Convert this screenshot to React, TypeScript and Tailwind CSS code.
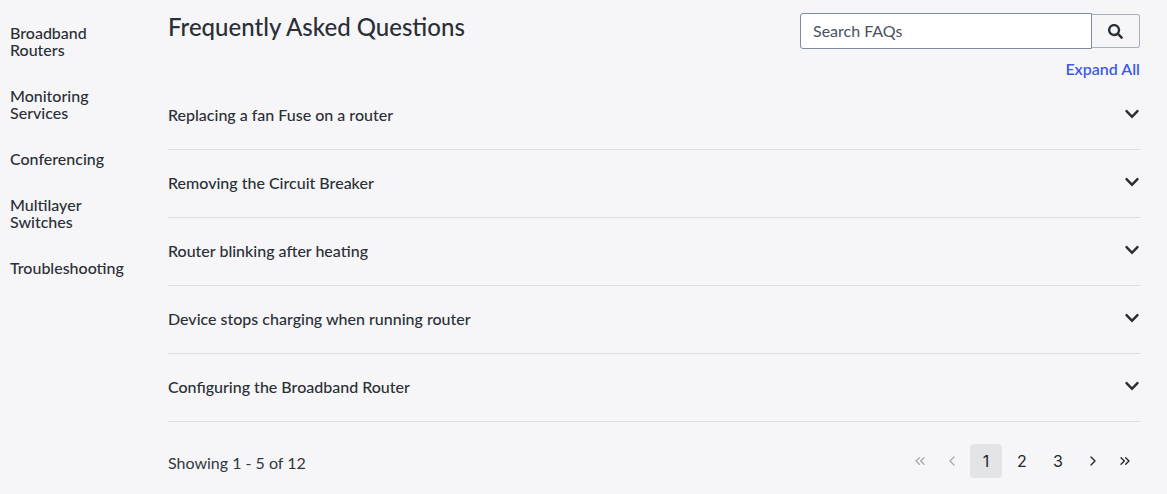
import { FaChevronDown, FaSearch } from 'react-icons/fa';
import { LuChevronLeft, LuChevronRight, LuChevronsLeft, LuChevronsRight } from 'react-icons/lu';

const categories = [
  ['Broadband', 'Routers'],
  ['Monitoring', 'Services'],
  ['Conferencing'],
  ['Multilayer', 'Switches'],
  ['Troubleshooting'],
];

const questions = [
  'Replacing a fan Fuse on a router',
  'Removing the Circuit Breaker',
  'Router blinking after heating',
  'Device stops charging when running router',
  'Configuring the Broadband Router',
];

export default function App() {
  return (
    <div className="flex h-[494px] w-[1167px] overflow-hidden bg-[#f6f6f9] font-['Lato',sans-serif] text-[#2b2f36]">
      <aside className="w-[168px] shrink-0 pl-[10px] pt-[24px]">
        <ul className="flex flex-col gap-[29px]">
          {categories.map((lines) => (
            <li key={lines[0]} className="text-[16px] font-medium leading-[17px]">
              {lines.map((line) => (
                <div key={line}>{line}</div>
              ))}
            </li>
          ))}
        </ul>
      </aside>

      <main className="flex w-[972px] flex-col">
        <div className="flex items-start justify-between pt-[13px]">
          <h1 className="text-[24px] font-medium leading-[28px]">Frequently Asked Questions</h1>
          <div className="flex flex-col items-end">
            <div className="flex items-center">
              <div className="flex h-[36px] w-[292px] items-center rounded-l-[3px] border border-[#7f8ba3] bg-white pl-[12px] text-[16px] text-[#4a5260]">
                Search FAQs
              </div>
              <button className="flex h-[34px] w-[48px] items-center justify-center rounded-r-[3px] border border-l-0 border-[#a9afbc] bg-[#f6f6f9]">
                <FaSearch size={15} className="text-[#2b2f36]" />
              </button>
            </div>
            <a className="mt-[10px] text-[16px] font-semibold leading-[20px] text-[#3f5ae8]">Expand All</a>
          </div>
        </div>

        <div className="mt-[3px]">
          {questions.map((q) => (
            <div key={q} className="flex h-[68px] items-center justify-between border-b border-[#dcdee3] pb-[1px]">
              <span className="text-[16px] font-medium">{q}</span>
              <FaChevronDown size={16} className="mb-[3px] text-[#2b2f36]" />
            </div>
          ))}
        </div>

        <div className="flex items-center justify-between pt-[22px]">
          <span className="mt-[3px] text-[16px] text-[#33373e]">Showing 1 - 5 of 12</span>
          <nav className="mr-[2px] flex items-center font-['Inter',sans-serif] text-[16px] text-[#22252b]">
            <span className="flex h-[34px] w-[32px] items-center justify-center text-[#a8abb3]">
              <LuChevronsLeft size={16} />
            </span>
            <span className="mr-[2px] flex h-[34px] w-[32px] items-center justify-center text-[#a8abb3]">
              <LuChevronLeft size={16} />
            </span>
            <span className="flex h-[34px] w-[32px] items-center justify-center rounded-[4px] bg-[#e2e4e8]">1</span>
            <span className="ml-[4px] flex h-[34px] w-[32px] items-center justify-center">2</span>
            <span className="ml-[4px] flex h-[34px] w-[32px] items-center justify-center">3</span>
            <span className="flex h-[34px] w-[38px] items-center justify-center">
              <LuChevronRight size={16} />
            </span>
            <span className="flex h-[34px] w-[26px] items-center justify-center">
              <LuChevronsRight size={16} />
            </span>
          </nav>
        </div>
      </main>
    </div>
  );
}
